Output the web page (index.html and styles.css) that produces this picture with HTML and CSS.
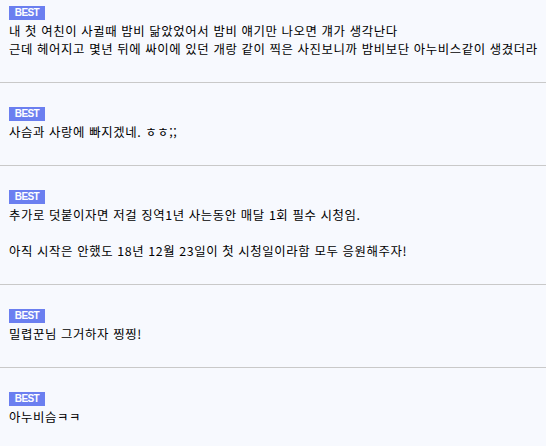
FILE: index.html
```html
<!DOCTYPE html>
<html lang="ko">
<head>
    <meta charset="UTF-8">
    <meta name="viewport" content="width=device-width, initial-scale=1.0">
    <title>베스트 댓글</title>
    <link rel="stylesheet" href="styles.css">
</head>
<body>
    <ul class="comment-list">
        <li class="comment comment-first">
            <span class="badge">BEST</span>
            <p class="comment-text">내 첫 여친이 사귈때 밤비 닮았었어서 밤비 얘기만 나오면 걔가 생각난다<br>근데 헤어지고 몇년 뒤에 싸이에 있던 개랑 같이 찍은 사진보니까 밤비보단 아누비스같이 생겼더라</p>
        </li>
        <li class="comment">
            <span class="badge">BEST</span>
            <p class="comment-text">사슴과 사랑에 빠지겠네. ㅎㅎ;;</p>
        </li>
        <li class="comment">
            <span class="badge">BEST</span>
            <p class="comment-text">추가로 덧붙이자면 저걸 징역1년 사는동안 매달 1회 필수 시청임.<br><br>아직 시작은 안했도 18년 12월 23일이 첫 시청일이라함 모두 응원해주자!</p>
        </li>
        <li class="comment">
            <span class="badge">BEST</span>
            <p class="comment-text">밀렵꾼님 그거하자 찡찡!</p>
        </li>
        <li class="comment">
            <span class="badge">BEST</span>
            <p class="comment-text">아누비슴ㅋㅋ</p>
        </li>
    </ul>
</body>
</html>
```

FILE: styles.css
```css
body {
  margin: 0;
  background-color: #f7f9fe;
  font-family: "Noto Sans CJK KR", "Noto Sans", sans-serif;
  color: #000;
}

.comment-list {
  list-style: none;
  margin: 0;
  padding: 0;
}

.comment {
  padding: 24px 9px;
  border-bottom: 1px solid #c9c9c9;
}

.comment-first {
  padding-top: 6px;
}

.badge {
  display: block;
  width: 36px;
  height: 14px;
  margin-bottom: 2px;
  background-color: #6b7ff0;
  color: #fff;
  font-family: "Liberation Sans", Arial, sans-serif;
  font-size: 10px;
  font-weight: bold;
  line-height: 14px;
  letter-spacing: -0.6px;
  text-align: center;
}

.comment-text {
  margin: 0;
  font-size: 12.4px;
  line-height: 18px;
  letter-spacing: 0.6px;
  white-space: nowrap;
}
```
